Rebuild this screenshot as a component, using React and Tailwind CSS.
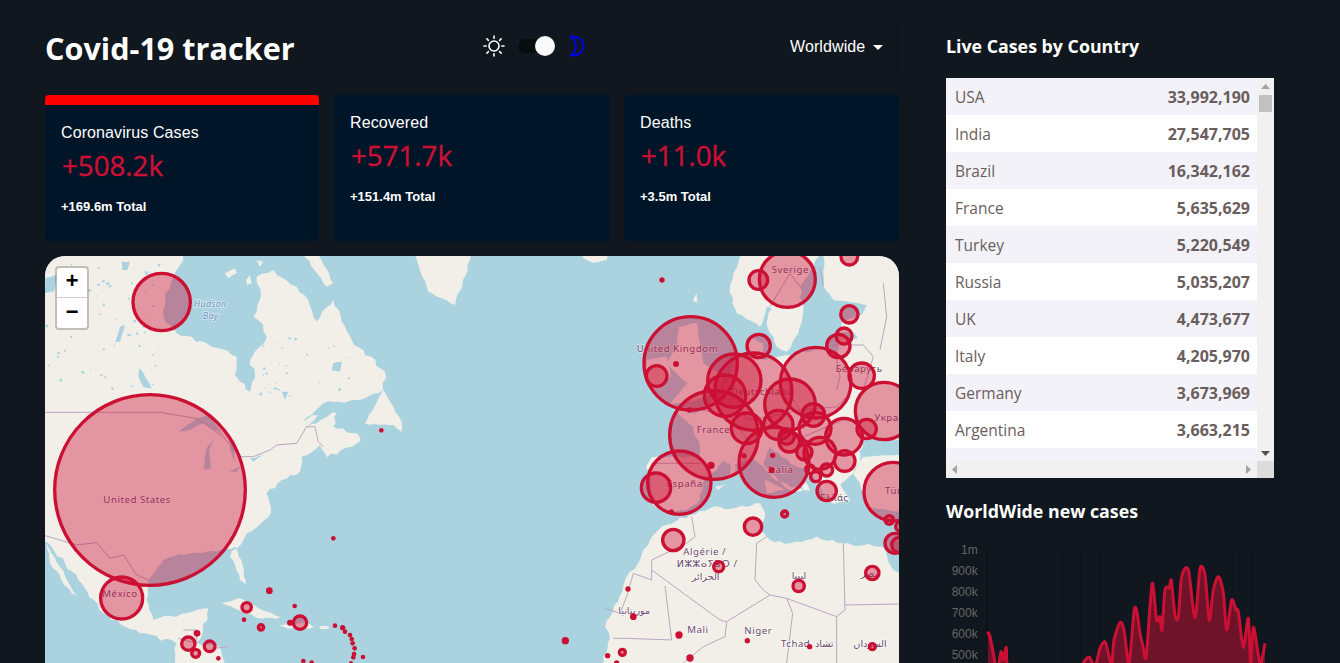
import React from "react";

const sans = "font-['Open_Sans','Noto_Sans',sans-serif]";
const rows = [
  ["USA", "33,992,190"], ["India", "27,547,705"], ["Brazil", "16,342,162"], ["France", "5,635,629"],
  ["Turkey", "5,220,549"], ["Russia", "5,035,207"], ["UK", "4,473,677"], ["Italy", "4,205,970"],
  ["Germany", "3,673,969"], ["Argentina", "3,663,215"],
];

const pts = (a) => a.map((p) => p.join(",")).join(" ");

function rough(p, amp) {
  const out = [];
  p.forEach((a, i) => {
    const b = p[(i + 1) % p.length];
    const len = Math.hypot(b[0] - a[0], b[1] - a[1]);
    const n = Math.max(1, Math.round(len / 16));
    const nx = (a[1] - b[1]) / (len || 1), ny = (b[0] - a[0]) / (len || 1);
    for (let j = 0; j < n; j++) {
      const t = j / n;
      const s = j === 0 ? 0 : Math.sin((a[0] + j) * 12.9898 + (a[1] + j) * 78.233) * 43758.5453;
      const w = j === 0 ? 0 : (s - Math.floor(s) - 0.5) * 2 * amp;
      out.push([a[0] + (b[0] - a[0]) * t + nx * w, a[1] + (b[1] - a[1]) * t + ny * w]);
    }
  });
  return pts(out.map(([x, y]) => [Math.round(x), Math.round(y)]));
}

const landLeft = [
  [[-30,-30],[445,-30],[430,30],[400,80],[375,130],[370,200],[410,250],[500,280],[590,320],[585,375],[600,395],[630,425],[645,385],[630,330],[680,260],[670,225],[640,200],[660,150],[650,80],[700,60],[770,110],[805,150],[830,215],[880,150],[905,215],[935,270],[1035,365],[1030,420],[975,445],[850,460],[790,515],[850,485],[890,490],[880,530],[950,550],[962,572],[860,622],[840,585],[785,620],[780,665],[725,690],[680,730],[692,790],[620,850],[570,920],[600,990],[618,1003],[612,960],[585,890],[530,905],[450,910],[370,930],[325,990],[320,1050],[340,1110],[440,1090],[505,1075],[490,1140],[470,1178],[540,1190],[565,1300],[400,1300],[410,1180],[300,1150],[190,1090],[125,1000],[25,880],[-30,840]],
  [[1105,-30],[1290,-30],[1290,30],[1245,165],[1165,125]],
  [[975,520],[1030,420],[1060,470],[1085,515],[1085,545],[1060,525],[1020,525]],
  [[760,-30],[815,-30],[880,100],[860,110]],
  [[555,70],[585,55],[590,70],[565,85]],
  [[618,90],[630,75],[635,100],[622,105]],
  [[650,30],[670,35],[660,50]],
  [[545,1058],[600,1045],[680,1085],[722,1102],[665,1106],[600,1082]],
  [[716,1126],[800,1116],[822,1132],[745,1136]],
  [[838,1130],[866,1129],[866,1137],[840,1137]],
  [[20,880],[60,950],[115,1045],[95,1030],[30,940]],
];

const lakes = [
  [[415,545],[470,505],[510,495],[550,555],[490,520],[450,540]],
  [[492,660],[497,600],[525,562],[508,600],[513,655]],
  [[565,565],[585,572],[582,635],[570,600]],
  [[568,665],[612,642],[590,665]],
  [[630,625],[670,615],[640,635]],
  [[300,355],[335,415],[310,410],[295,380]],
  [[240,230],[255,225],[240,275],[225,275]],
  [[15,85],[50,75],[45,120],[15,130]],
  [[245,35],[270,35],[262,60],[245,60]],
  [[590,380],[610,370],[620,400]],
  [[615,265],[650,220],[680,260],[635,320],[590,320]],
  [[800,530],[860,470],[880,485],[830,520]],
  [[880,340],[905,335],[900,365],[875,360]],
  [[725,425],[745,425],[735,450]],
];

const lakeDots = [];
for (let i = 0; i < 90; i++) {
  const a = Math.sin(i * 91.7) * 1000, b = Math.sin(i * 37.3) * 1000, c = Math.sin(i * 11.1) * 1000;
  const fa = a - Math.floor(a), fb = b - Math.floor(b), fc = c - Math.floor(c);
  if (i % 3 === 0) lakeDots.push([660 + fa * 300, 260 + fb * 180, 1.5 + fc * 3]);
  else lakeDots.push([20 + fa * 340, 40 + fb * 380, 1.5 + fc * 3]);
}

const landRight = [
  [[330,-30],[430,-30],[410,30],[370,38],[340,25]],
  [[790,70],[840,-30],[1060,-30],[1030,50],[990,110],[1000,170],[985,250],[950,305],[920,290],[890,220],[905,175],[890,170],[870,230],[800,190],[780,130]],
  [[1062,-30],[1320,-30],[1320,300],[1180,285],[1150,245],[1110,250],[1115,215],[1175,195],[1190,165],[1090,150],[1060,110]],
  [[625,230],[680,218],[692,290],[700,340],[760,380],[750,420],[680,450],[600,462],[652,400],[620,370],[590,340],[620,290]],
  [[530,330],[590,320],[602,380],[540,422],[525,370]],
  [[610,478],[680,490],[760,420],[800,320],[835,330],[840,260],[880,280],[880,330],[980,310],[1070,290],[1100,320],[1108,262],[1180,270],[1320,250],[1320,568],[1260,570],[1180,560],[1172,620],[1150,670],[1112,702],[1142,750],[1090,762],[1040,700],[1020,662],[960,640],[900,590],[880,640],[905,680],[965,712],[1000,720],[1000,690],[1020,722],[960,720],[880,650],[842,622],[800,642],[760,632],[702,692],[690,750],[650,780],[600,792],[548,762],[528,650],[545,622],[690,622],[690,590],[670,530]],
  [[1150,672],[1180,620],[1320,612],[1320,790],[1190,772],[1170,700]],
  [[540,870],[575,830],[660,795],[720,775],[830,770],[870,760],[885,800],[870,840],[900,870],[960,880],[1040,860],[1120,880],[1240,890],[1270,960],[1320,1000],[1320,1300],[400,1300],[400,1220],[420,1165],[405,1130],[430,1080],[470,980],[510,930]],
  [[780,640],[795,640],[795,680],[780,680]],
  [[885,690],[945,720],[890,730]],
  [[668,150],[680,130],[682,160]],
  [[735,710],[770,700],[745,720]],
];
const bordersLeft = [
  [[15,487],[365,487],[375,490],[470,505],[550,560],[600,620],[640,620],[690,600],[710,585],[770,580],[800,530],[825,530],[835,575],[850,590]],
  [[15,857],[110,885],[170,878],[210,925],[250,915],[290,975],[325,990]],
  [[430,1140],[470,1140],[470,1180],[415,1165]],
  [[520,1195],[565,1190]],
];
const bordersRight = [
  [[665,800],[675,860],[650,880],[545,930],[545,990],[490,970],[470,1040],[450,1090],[405,1075]],
  [[545,960],[750,1110],[770,1115],[900,1035],[950,1045],[1100,1100],[1125,1080],[1120,880]],
  [[585,1008],[605,1170],[470,1165],[430,1165]],
  [[860,880],[855,990],[880,1020],[900,1035]],
  [[770,1115],[765,1160],[700,1190],[640,1239]],
  [[950,1045],[968,1090],[950,1239]],
  [[1100,1100],[1100,1239]],
  [[1125,1065],[1288,1062]],
  [[860,880],[890,860]],
  [[1090,285],[1180,285],[1210,320],[1180,420]],
  [[1100,420],[1110,380],[1100,330]],
  [[890,430],[960,430],[990,480],[1100,470],[1130,440]],
  [[800,330],[790,420],[830,510],[900,500],[990,480]],
  [[660,470],[780,500],[840,580]],
  [[545,640],[690,640]],
  [[1000,560],[1120,510],[1175,520]],
  [[1230,300],[1250,200],[1240,100]],
  [[1060,110],[1050,50]],
  [[990,110],[960,70],[900,170]],
];

const circLeft = [[365,156,91],[330,720,291],[245,1044,68],[1024,541,7],[880,865,7],[688,1022,10],[620,1072,19],[612,1109,7],[663,1132,13],[764,1068,7],[780,1118,25],[750,1118,9],[885,1127,7],[908,1133,8],[915,1145,7],[930,1155,7],[935,1167,7],[938,1180,7],[944,1195,7],[942,1212,7],[940,1222,7],[969,1221,7],[790,1233,7],[815,1238,7],[933,1239,6],[471,1150,10],[445,1181,25],[467,1210,17],[509,1189,21],[535,1225,7]];
const circRight = [[952,88,89],[865,90,33],[1138,20,30],[1138,193,31],[1122,258,29],[1105,288,40],[866,288,40],[662,340,145],[560,378,36],[850,425,121],[793,392,85],[765,437,67],[960,463,81],[1037,398,111],[1175,377,43],[1242,483,91],[732,555,138],[628,698,100],[558,713,49],[912,637,110],[830,535,51],[925,525,49],[1030,495,39],[1035,535,53],[1122,560,60],[1190,537,34],[958,575,36],[950,560,28],[1050,610,53],[1124,633,36],[1003,607,28],[1070,660,23],[1037,680,20],[1020,658,18],[1070,723,34],[1270,725,93],[610,870,37],[849,830,31],[944,792,14],[986,1008,22],[1207,969,25],[746,950,20],[474,1017,8],[490,1100,10],[627,1155,11],[832,1172,8],[1019,1190,8],[1207,1190,14],[457,1207,14],[286,1172,11],[413,1217,8],[660,1224,11],[440,1239,8],[576,90,8],[618,342,9],[723,646,11],[822,617,8],[908,616,8],[905,660,9],[604,786,8],[658,480,8],[1258,810,18],[1290,830,18],[1275,880,35],[1288,885,28]];

function Circles({ list }) {
  return list.map(([x, y, r], i) =>
    r <= 11 ? (
      <circle key={i} cx={x} cy={y} r={r} fill="#cc1034" />
    ) : (
      <circle key={i} cx={x} cy={y} r={r - 5} fill="#cc1034" fillOpacity="0.4" stroke="#cc1034" strokeWidth="10" />
    )
  );
}

function Label({ x, y, children, size = 29, fill = "#6d4a70", ls = 1.6, italic }) {
  return (
    <text x={x} y={y} fontSize={size} fill={fill} letterSpacing={ls} fontStyle={italic ? "italic" : "normal"}
      fontFamily="'Noto Sans','DejaVu Sans',sans-serif" stroke="#ffffff" strokeOpacity="0.55" strokeWidth="5" paintOrder="stroke">
      {children}
    </text>
  );
}

function MapDrawing() {
  return (
    <svg className="block w-full h-full" viewBox="0 0 854 407">
      <rect width="854" height="407" fill="#aad3df" />
      <g transform="translate(-5 -6) scale(0.33333)">
        {landLeft.map((p, i) => <polygon key={i} points={rough(p, p.length > 12 ? 6 : 3)} fill="#f2efe9" strokeLinejoin="round" />)}
        {lakes.map((p, i) => <polygon key={i} points={rough(p, 2)} fill="#aad3df" />)}
        {lakeDots.map(([x, y, r], i) => <circle key={i} cx={x} cy={y} r={r} fill="#aad3df" />)}
        {bordersLeft.map((p, i) => <polyline key={i} points={pts(p)} fill="none" stroke="#b9a6c0" strokeWidth="3" />)}
        <Label x={462} y={172} size={27} fill="#6f8fc0" ls={1} italic>Hudson</Label>
        <Label x={488} y={208} size={27} fill="#6f8fc0" ls={1} italic>Bay</Label>
        <Label x={190} y={760}>United States</Label>
        <Label x={187} y={1040}>México</Label>
        <Circles list={circLeft} />
      </g>
      <g transform="translate(425 -6) scale(0.33333)">
        {landRight.map((p, i) => <polygon key={i} points={rough(p, p.length > 12 ? 5 : 2)} fill="#f2efe9" />)}
        {bordersRight.map((p, i) => <polyline key={i} points={pts(p)} fill="none" stroke="#b9a6c0" strokeWidth="3" />)}
        <Label x={905} y={68}>Sverige</Label>
        <Label x={500} y={307}>United Kingdom</Label>
        <Label x={782} y={436}>Deutschland</Label>
        <Label x={680} y={548}>France</Label>
        <Label x={590} y={712}>España</Label>
        <Label x={893} y={668}>Italia</Label>
        <Label x={1097} y={367}>Беларусь</Label>
        <Label x={1213} y={512}>Україна</Label>
        <Label x={1245} y={733}>Türkiye</Label>
        <Label x={1050} y={752}>Ελλάς</Label>
        <Label x={640} y={916}>Algérie /</Label>
        <Label x={620} y={952}>ⵍⵣⵣⴰⵢⴻⵔ /</Label>
        <Label x={665} y={990} ls={0}>الجزائر</Label>
        <Label x={965} y={988} ls={0}>ليبيا</Label>
        <Label x={1172} y={982} ls={0}>مصر</Label>
        <Label x={445} y={1093} ls={0}>موريتانيا</Label>
        <Label x={652} y={1150}>Mali</Label>
        <Label x={823} y={1153}>Niger</Label>
        <Label x={933} y={1190}>Tchad</Label>
        <Label x={1035} y={1190} ls={0}>تشاد</Label>
        <Label x={1150} y={1192} ls={0}>السودان</Label>
        <Circles list={circRight} />
      </g>
    </svg>
  );
}

const line = [[173,635],[180,650],[190,700],[198,745],[205,745],[213,695],[220,720],[229,682],[236,750],[300,790],[440,790],[460,729],[478,712],[495,740],[510,685],[525,665],[535,700],[545,735],[552,660],[570,608],[582,630],[597,730],[612,575],[620,572],[630,640],[638,675],[648,712],[660,560],[668,490],[680,600],[690,590],[696,630],[705,510],[718,503],[724,482],[735,585],[745,590],[755,470],[775,450],[795,595],[810,447],[825,465],[838,600],[850,510],[865,470],[880,520],[890,630],[905,540],[918,570],[925,575],[940,682],[955,595],[962,735],[970,622],[985,705],[992,735],[1005,670]];

function smooth(p) {
  let d = `M${p[0][0]} ${p[0][1]}`;
  for (let i = 0; i < p.length - 1; i++) {
    const a = p[Math.max(0, i - 1)], b = p[i], c = p[i + 1], e = p[Math.min(p.length - 1, i + 2)];
    const k = 0.14;
    d += ` C${b[0] + (c[0] - a[0]) * k} ${b[1] + (c[1] - a[1]) * k} ${c[0] - (e[0] - b[0]) * k} ${c[1] - (e[1] - b[1]) * k} ${c[0]} ${c[1]}`;
  }
  return d;
}

function Chart() {
  const d = smooth(line);
  const ys = [["1m",390],["900k",453],["800k",516],["700k",579],["600k",642],["500k",705]];
  const gx = [172,228,285,345,398,452,510,567,625,683,738,792,850,907,965];
  return (
    <svg className="block w-[328px] h-[140px]" viewBox="48 360 984 420">
      {gx.map((x, i) => <line key={x} x1={x} x2={x} y1={390} y2={780} stroke={i === 0 ? "#0a0e12" : "#0e141a"} strokeWidth="3" />)}
      {ys.map(([t, y]) => (
        <text key={t} x={143} y={y + 11} textAnchor="end" fontSize="36" fill="#666666" fontFamily="'Liberation Sans',Arial,sans-serif">{t}</text>
      ))}
      <path d={`${d} L1005 800 L173 800 Z`} fill="#cc1034" fillOpacity="0.5" />
      <path d={d} fill="none" stroke="#cc1034" strokeWidth="9" strokeLinejoin="round" />
    </svg>
  );
}

function Card({ title, value, total, active, className }) {
  return (
    <div className={`h-[146px] rounded bg-[#001528] overflow-hidden ${active ? "border-t-[10px] border-[#ff0000] w-[274px]" : ""} ${className}`}>
      <div className="px-4 pt-[17px]">
        <div className="font-['Liberation_Sans',Arial,sans-serif] text-base leading-[22px] tracking-[0.1px] text-white">{title}</div>
        <div className={`${sans} text-[27.7px] leading-[42px] text-[#cc1034] ml-[1px] [-webkit-text-stroke:0.4px_#cc1034]`}>{value}</div>
        <div className="font-['Liberation_Sans',Arial,sans-serif] font-bold text-[13px] leading-[18px] text-white mt-[12px]">{total}</div>
      </div>
    </div>
  );
}

function Tri({ dir, color, className }) {
  const p = { up: "0,5 4.5,0 9,5", down: "0,0 4.5,5 9,0", left: "5,0 0,4.5 5,9", right: "0,0 5,4.5 0,9" }[dir];
  const big = dir === "up" || dir === "down";
  return (
    <svg className={className} width={big ? 9 : 5} height={big ? 5 : 9}>
      <polygon points={p} fill={color} />
    </svg>
  );
}

export default function App() {
  return (
    <div className="h-[663px] w-[1340px] overflow-hidden bg-[#10171e] flex pl-[45px]">
      <div className="w-[854px] shrink-0 pt-[18px]">
        <header className="flex items-start justify-between h-[57px] mb-[20px]">
          <h1 className={`${sans} font-bold text-[30.6px] leading-[41px] text-white w-[438px] mt-[10px] whitespace-nowrap`}>Covid-19 tracker</h1>
          <div className="flex items-center w-[292px] h-[22px] mt-[17px]">
            <svg width="22" height="22" viewBox="0 0 22 22" className="text-white" stroke="currentColor" strokeWidth="1.6" fill="none" strokeLinecap="round">
              <circle cx="11" cy="11" r="5" />
              <path d="M11 1v2.2M11 18.8V21M1 11h2.2M18.8 11H21M3.9 3.9l1.5 1.5M16.6 16.6l1.5 1.5M3.9 18.1l1.5-1.5M16.6 5.4l1.5-1.5" />
            </svg>
            <div className="relative w-[37px] h-[14px] ml-[13px] rounded-full bg-[#0a0d10]">
              <div className="absolute right-0 top-[-3px] w-5 h-5 rounded-full bg-[#fafafa]" />
            </div>
            <svg width="16" height="22" viewBox="0 0 16 22" className="ml-[14px]" fill="none" stroke="#0000ff" strokeWidth="1.8" strokeLinejoin="round">
              <path d="M1.5 1.5C9 1 14.5 5 14.5 11S9 21 1.5 20.5C5.5 18 7 15 7 11S5.5 4 1.5 1.5Z" />
            </svg>
          </div>
          <div className="w-[124px] h-[58px] rounded border-2 border-[#09161f] flex items-center pl-[13px] font-['Liberation_Sans',Arial,sans-serif] text-base tracking-[0.1px] text-white">
            Worldwide
            <svg width="10" height="5" className="ml-[8px]"><polygon points="0,0 10,0 5,5" fill="#ffffff" /></svg>
          </div>
        </header>
        <div className="flex">
          <Card active title="Coronavirus Cases" value="+508.2k" total="+169.6m Total" className="" />
          <Card title="Recovered" value="+571.7k" total="+151.4m Total" className="w-[276px] ml-[15px]" />
          <Card title="Deaths" value="+11.0k" total="+3.5m Total" className="w-[275px] ml-[14px]" />
        </div>
        <div className="mt-[15px] h-[500px] rounded-[20px] overflow-hidden relative">
          <div className="h-[407px]"><MapDrawing /></div>
          <div className="absolute left-[10px] top-[10px] w-[34px] rounded border-2 border-[#00000033] bg-clip-padding">
            <div className="h-[30px] bg-white rounded-t-sm border-b border-[#cccccc] flex items-center justify-center text-black font-bold text-[22px] font-['Liberation_Mono',monospace]">+</div>
            <div className="h-[30px] bg-white rounded-b-sm flex items-center justify-center text-black font-bold text-[22px] font-['Liberation_Mono',monospace]">−</div>
          </div>
        </div>
      </div>
      <aside className="w-[328px] ml-[47px] shrink-0">
        <h3 className={`${sans} font-bold text-[17.8px] leading-[24px] text-white mt-[34px] mb-[20px]`}>Live Cases by Country</h3>
        <div className="h-[400px] flex flex-col bg-[#f1f1f1]">
          <div className="flex h-[383px]">
            <div className="w-[311px] overflow-hidden">
              {rows.map(([c, n], i) => (
                <div key={c} className={`h-[37px] flex items-center justify-between pl-[9px] pr-[7px] text-[#6a5d5d] ${sans} ${i % 2 ? "bg-white" : "bg-[#f3f2f8]"}`}>
                  <span className="text-[15.5px] mt-[2px]">{c}</span>
                  <span className="text-base font-bold mt-[1px]">{n}</span>
                </div>
              ))}
              <div className="h-[13px] bg-[#f3f2f8]" />
            </div>
            <div className="w-[17px] relative">
              <Tri dir="up" color="#a3a3a3" className="absolute left-1 top-[6px]" />
              <div className="absolute left-[2px] top-[17px] w-[13px] h-[17px] bg-[#c1c1c1]" />
              <Tri dir="down" color="#505050" className="absolute left-1 bottom-[5px]" />
            </div>
          </div>
          <div className="flex h-[17px]">
            <div className="w-[311px] flex items-center justify-between px-[6px]">
              <Tri dir="left" color="#a3a3a3" />
              <Tri dir="right" color="#a3a3a3" />
            </div>
            <div className="w-[17px] bg-[#dcdcdc]" />
          </div>
        </div>
        <h3 className={`${sans} font-bold text-[17.8px] leading-[24px] text-white mt-[21px] mb-[17px]`}>WorldWide new cases</h3>
        <Chart />
      </aside>
    </div>
  );
}
